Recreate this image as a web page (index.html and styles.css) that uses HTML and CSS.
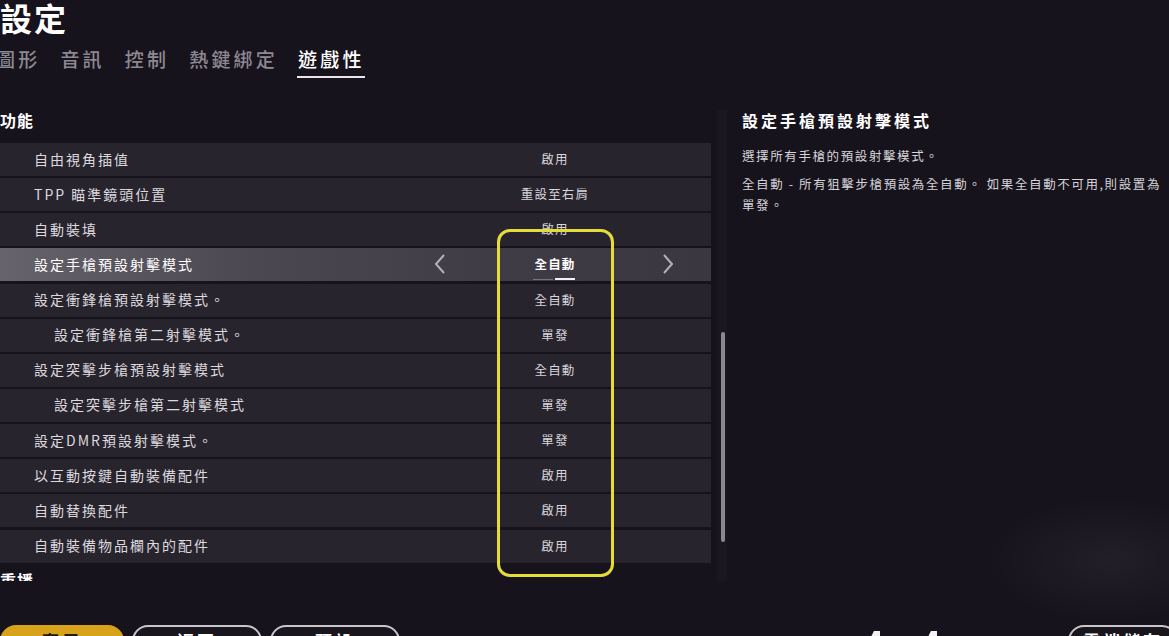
FILE: index.html
```html
<!DOCTYPE html>
<html lang="zh-Hant">
<head>
<meta charset="utf-8">
<title>設定</title>
<link rel="stylesheet" href="styles.css">
</head>
<body>
<div class="page">
  <header class="head">
    <h1 class="title">設定</h1>
    <nav class="tabs">
      <span class="tab">圖形</span>
      <span class="tab">音訊</span>
      <span class="tab">控制</span>
      <span class="tab">熱鍵綁定</span>
      <span class="tab active">遊戲性</span>
    </nav>
  </header>

  <main class="main">
    <section class="list-col">
      <div class="list">
        <h2 class="section">功能</h2>
        <div class="row"><span class="label">自由視角插值</span><span></span><span class="value">啟用</span></div>
        <div class="row"><span class="label">TPP 瞄準鏡頭位置</span><span></span><span class="value">重設至右肩</span></div>
        <div class="row"><span class="label">自動裝填</span><span></span><span class="value">啟用</span></div>
        <div class="row selected">
          <span class="label">設定手槍預設射擊模式</span>
          <span class="arrow"><svg width="12" height="20" viewBox="0 0 12 20"><path d="M10 1 L2 10 L10 19" fill="none" stroke="#b4b0b8" stroke-width="2"/></svg></span>
          <span class="value cur">全自動<span class="dots"><i class="dim"></i><i class="on"></i></span></span>
          <span class="arrow"><svg width="12" height="20" viewBox="0 0 12 20"><path d="M2 1 L10 10 L2 19" fill="none" stroke="#b4b0b8" stroke-width="2"/></svg></span>
        </div>
        <div class="row"><span class="label">設定衝鋒槍預設射擊模式。</span><span></span><span class="value">全自動</span></div>
        <div class="row"><span class="label sub">設定衝鋒槍第二射擊模式。</span><span></span><span class="value">單發</span></div>
        <div class="row"><span class="label">設定突擊步槍預設射擊模式</span><span></span><span class="value">全自動</span></div>
        <div class="row"><span class="label sub">設定突擊步槍第二射擊模式</span><span></span><span class="value">單發</span></div>
        <div class="row"><span class="label">設定DMR預設射擊模式。</span><span></span><span class="value">單發</span></div>
        <div class="row"><span class="label">以互動按鍵自動裝備配件</span><span></span><span class="value">啟用</span></div>
        <div class="row"><span class="label">自動替換配件</span><span></span><span class="value">啟用</span></div>
        <div class="row"><span class="label">自動裝備物品欄內的配件</span><span></span><span class="value">啟用</span></div>
        <h2 class="section next">重播</h2>
      </div>
      <div class="highlight"></div>
    </section>

    <div class="scroll"><div class="thumb"></div></div>

    <aside class="info">
      <h2 class="info-title">設定手槍預設射擊模式</h2>
      <p class="info-text">選擇所有手槍的預設射擊模式。</p>
      <p class="info-text">全自動 - 所有狙擊步槍預設為全自動。 如果全自動不可用,則設置為單發。</p>
    </aside>
  </main>

  <footer class="foot">
    <div class="btns">
      <button class="btn primary">套用</button>
      <button class="btn">返回</button>
      <button class="btn">預設</button>
    </div>
    <div class="right">
      <span class="key"></span>
      <span class="key"></span>
      <button class="btn cloud">雲端儲存</button>
    </div>
  </footer>
</div>
</body>
</html>
```

FILE: styles.css
```css
* { box-sizing: border-box; }
html, body {
  margin: 0;
  padding: 0;
  width: 1169px;
  height: 636px;
  overflow: hidden;
  background: #17131c;
}
body {
  font-family: "Noto Sans CJK TC", "Noto Sans", sans-serif;
  color: #fff;
}
.page {
  width: 1169px;
  height: 636px;
  overflow: hidden;
  display: flex;
  flex-direction: column;
  background: radial-gradient(ellipse 180px 90px at 1110px 560px, rgba(255,255,255,0.05), rgba(255,255,255,0) 70%), #17131c;
}
.head { display: flex; flex-direction: column; height: 80px; flex: none; }
.title {
  margin: 0;
  font-size: 32px;
  line-height: 34px;
  font-weight: 700;
  letter-spacing: 2px;
  height: 34px;
}
.tabs {
  display: flex;
  gap: 20px;
  margin-top: 12px;
  margin-left: -4px;
  height: 34px;
}
.tab {
  font-size: 19px;
  line-height: 26px;
  letter-spacing: 3.2px;
  color: #8d8993;
  font-weight: 500;
  position: relative;
}
.tab.active { color: #fff; }
.tab.active::after {
  content: "";
  position: absolute;
  left: -1px;
  right: 0;
  top: 30px;
  height: 2px;
  background: #e8e6ea;
}
.main {
  display: flex;
  height: 501px;
  flex: none;
}
.list-col {
  width: 711px;
  position: relative;
  height: 501px;
}
.list {
  height: 501px;
  overflow: hidden;
  padding-top: 28px;
}
.section {
  margin: 0 0 11px 0;
  font-size: 16px;
  line-height: 24px;
  font-weight: 700;
  letter-spacing: 1px;
}
.section.next { margin-top: 5px; }
.row {
  display: grid;
  grid-template-columns: 425px 30px 200px 26px 1fr;
  align-items: center;
  height: 33px;
  margin-bottom: 2.15px;
  padding-bottom: 2px;
  background: #28242d;
}
.row.selected {
  background: linear-gradient(90deg, #67636c 0%, #4c4852 35%, #403c46 70%, #3b3741 100%);
}
.label {
  padding-left: 34px;
  font-size: 14px;
  letter-spacing: 2px;
  color: #dcd9df;
  white-space: nowrap;
}
.label.sub { padding-left: 54px; }
.selected .label { color: #fff; }
.value {
  grid-column: 3;
  text-align: center;
  font-size: 12.5px;
  letter-spacing: 1.2px;
  color: #d8d5db;
  position: relative;
}
.value.cur { color: #fff; font-weight: 700; }
.dots {
  position: absolute;
  left: 78px;
  top: 24px;
  display: flex;
  gap: 2px;
}
.dots i { display: block; width: 20px; height: 2px; }
.dots .dim { background: #77737c; height: 1px; margin-top: 1px; }
.dots .on { background: #f2f0f4; }
.arrow { display: flex; justify-content: center; align-items: center; }
.highlight {
  position: absolute;
  left: 497px;
  top: 149px;
  width: 117px;
  height: 348px;
  border: 3px solid #e5dc3a;
  border-radius: 13px;
  pointer-events: none;
}
.scroll {
  width: 31px;
  position: relative;
  height: 501px;
}
.scroll::before {
  content: "";
  position: absolute;
  left: 6px;
  top: 30px;
  bottom: 0;
  width: 10px;
  background: #1b171f;
}
.thumb {
  position: absolute;
  left: 10px;
  top: 252px;
  width: 4px;
  height: 210px;
  border-radius: 2px;
  background: #8c8891;
}
.info {
  width: 426px;
}
.info-title {
  margin: 28px 0 13px 0;
  font-size: 16px;
  line-height: 24px;
  font-weight: 700;
  letter-spacing: 3px;
}
.info-text {
  margin: 0 0 7px 0;
  font-size: 12.5px;
  line-height: 21px;
  letter-spacing: 1.6px;
  color: #d6d3d9;
}
.foot {
  display: flex;
  justify-content: space-between;
  align-items: flex-start;
  margin-top: 44px;
  flex: none;
}
.btns { display: flex; gap: 8px; }
.btn {
  font-family: "Noto Sans CJK TC", "Noto Sans", sans-serif;
  height: 32px;
  width: 130px;
  border-radius: 16px;
  border: 2px solid #c9c6cc;
  background: #1a161e;
  color: #fff;
  font-size: 17px;
  font-weight: 700;
  letter-spacing: 3px;
  line-height: 26px;
  padding: 0;
}
.btn.primary {
  width: 124px;
  background: #d6a31b;
  border-color: #d6a31b;
  color: #231a08;
}
.right { display: flex; align-items: flex-start; }
.key {
  width: 11px;
  height: 10px;
  margin-top: 6px;
  background: #f4f2f5;
  clip-path: polygon(45% 0, 100% 0, 100% 100%, 0 100%);
  margin-right: 46px;
}
.key + .key { margin-right: 131px; }
.btn.cloud { width: 110px; margin-right: -9px; }
```
